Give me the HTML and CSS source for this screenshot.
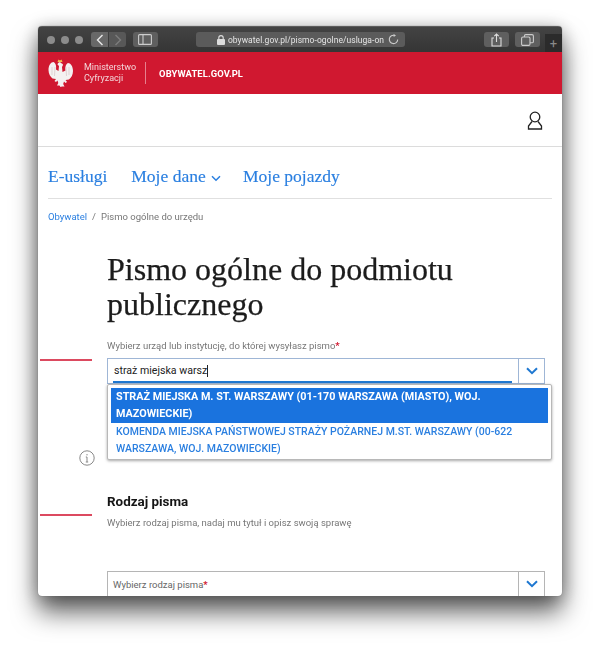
FILE: index.html
```html
<!DOCTYPE html>
<html lang="pl">
<head>
<meta charset="utf-8">
<title>Pismo ogólne</title>
<link rel="stylesheet" href="styles.css">
</head>
<body>
<div class="window">
  <div class="toolbar">
    <div class="lights"><i></i><i></i><i></i></div>
    <div class="navbtns">
      <span class="tbtn back"><svg width="8" height="12" viewBox="0 0 8 12"><path d="M6.5 1 1.5 6l5 5" fill="none" stroke="#e8e8e8" stroke-width="1.4"/></svg></span>
      <span class="tbtn fwd"><svg width="8" height="12" viewBox="0 0 8 12"><path d="M1.5 1l5 5-5 5" fill="none" stroke="#7c7c7c" stroke-width="1.4"/></svg></span>
    </div>
    <span class="tbtn sidebar"><svg width="14" height="11" viewBox="0 0 14 11"><rect x=".6" y=".6" width="12.8" height="9.8" rx="1" fill="none" stroke="#ccc" stroke-width="1.1"/><path d="M5 1v9" stroke="#ccc" stroke-width="1.1"/></svg></span>
    <div class="urlbar">
      <svg class="lock" width="8" height="10" viewBox="0 0 8 10"><rect x="0" y="4" width="8" height="6" rx="1" fill="#ddd"/><path d="M1.8 4.5V2.8a2.2 2.2 0 0 1 4.4 0v1.7" fill="none" stroke="#ddd" stroke-width="1.1"/></svg>
      <span class="url">obywatel.gov.pl/pismo-ogolne/usluga-on</span>
      <svg class="reload" width="11" height="11" viewBox="0 0 11 11"><path d="M6.8 1.4A4.2 4.2 0 1 0 9.7 5.5" fill="none" stroke="#ccc" stroke-width="1.1"/><path d="M5.6 0v3L8 1.5z" fill="#ccc"/></svg>
    </div>
    <span class="tbtn action"><svg width="11" height="14" viewBox="0 0 11 14"><path d="M3 5H1v8h9V5H8M5.5 9V1M3.3 3.2 5.5 1l2.2 2.2" fill="none" stroke="#ddd" stroke-width="1.1"/></svg></span>
    <span class="tbtn action"><svg width="13" height="12" viewBox="0 0 13 12"><rect x=".6" y="3" width="8.4" height="8.4" rx="1.4" fill="none" stroke="#ccc" stroke-width="1.1"/><path d="M3.4 3V2A1.4 1.4 0 0 1 4.8.6h6.2A1.4 1.4 0 0 1 12.4 2v5.4A1.4 1.4 0 0 1 11 8.800H9" fill="none" stroke="#ccc" stroke-width="1.1"/></svg></span>
    <span class="newtab">+</span>
  </div>

  <header class="brand">
    <svg class="eagle" width="27" height="30" viewBox="0 0 27 30">
      <path d="M11 4 12 1.500l1.500 1 1.500-1 1 2.500z" fill="#f2c14e" transform="translate(-.5 0)"/>
      <path d="M13.500 5c1.500 0 2.500 1 2.500 2l-1 2 .5 5 3-1.500c-.5-3 .2-6.500 2.500-7.500 2.500 0 5 3 5 8 0 4-2 7-4 8.500l-3.500.5 1.500 2-1.500 1-1.500-1.500-.8 2.500 1.300 2.500h-2.500L13.500 29l-1-1.500H10l1.300-2.500-.8-2.500L9 24l-1.500-1 1.500-2-3.500-.5c-2-1.500-4-4.500-4-8.500 0-5 2.500-8 5-8 2.300 1 3 4.500 2.500 7.500l2.500 1.500.5-5-1.500-1.500c.2-1.500 1.500-2.500 3-2.500z" fill="#f4f1f1"/>
      <path d="M5 9v8M8 9l-.5 9M19 9l.5 9M22 9v8" stroke="#d6c4c6" stroke-width=".7"/>
    </svg>
    <div class="ministry">Ministerstwo<br>Cyfryzacji</div>
    <div class="site">OBYWATEL.GOV.PL</div>
  </header>

  <div class="userbar">
    <svg width="16" height="19" viewBox="0 0 16 19"><circle cx="8" cy="6" r="4.800" fill="none" stroke="#222" stroke-width="1.300"/><path d="M5 10.500 1.500 15v3h13v-3L11 10.500" fill="none" stroke="#222" stroke-width="1.300"/></svg>
  </div>

  <nav class="mainnav">
    <a>E-usługi</a>
    <a>Moje dane <svg class="navchev" width="10" height="7" viewBox="0 0 10 7"><path d="M1 1.200l4 4 4-4" fill="none" stroke="#2a7fe0" stroke-width="1.500"/></svg></a>
    <a>Moje pojazdy</a>
  </nav>

  <div class="crumbs"><a>Obywatel</a><span class="sep">/</span><span>Pismo ogólne do urzędu</span></div>

  <main class="content">
    <h1>Pismo ogólne do podmiotu publicznego</h1>

    <p class="fieldlabel">Wybierz urząd lub instytucję, do której wysyłasz pismo<b>*</b></p>
    <div class="fieldrow">
      <i class="marker"></i>
      <div class="combo active">
        <div class="comboinput"><span>straż miejska warsz</span><i class="caret"></i></div>
        <div class="comboarrow"><svg width="12" height="8" viewBox="0 0 12 8"><path d="M1 1.200l5 5 5-5" fill="none" stroke="#1f78d1" stroke-width="2"/></svg></div>
        <ul class="options">
          <li class="selected">STRAŻ MIEJSKA M. ST. WARSZAWY (01-170 WARSZAWA (MIASTO), WOJ. MAZOWIECKIE)</li>
          <li>KOMENDA MIEJSKA PAŃSTWOWEJ STRAŻY POŻARNEJ M.ST. WARSZAWY (00-622 WARSZAWA, WOJ. MAZOWIECKIE)</li>
        </ul>
        <svg class="info" width="16" height="16" viewBox="0 0 16 16"><circle cx="8" cy="8" r="7.200" fill="none" stroke="#888" stroke-width="1"/><path d="M8 4v1.400M8 7v5M6.800 7H8M6.800 12h2.400" stroke="#888" stroke-width="1"/></svg>
      </div>
    </div>

    <section class="section2">
      <h2>Rodzaj pisma</h2>
      <div class="fieldrow subrow"><i class="marker"></i><p class="sub">Wybierz rodzaj pisma, nadaj mu tytuł i opisz swoją sprawę</p></div>
      <div class="combo plain">
        <div class="comboinput"><span>Wybierz rodzaj pisma<b>*</b></span></div>
        <div class="comboarrow"><svg width="12" height="8" viewBox="0 0 12 8"><path d="M1 1.200l5 5 5-5" fill="none" stroke="#1f78d1" stroke-width="2"/></svg></div>
      </div>
    </section>
  </main>
</div>
</body>
</html>
```

FILE: styles.css
```css
* { box-sizing: border-box; }
html, body { margin: 0; height: 100%; background: #fff; overflow: hidden; }
body { padding: 26px 38px 0; font-family: Roboto, "Liberation Sans", sans-serif; }

.window {
  width: 524px;
  height: 570px;
  border-radius: 4px;
  overflow: hidden;
  background: #fff;
  box-shadow: 0 0 1px #555, 0 16px 26px rgba(0,0,0,.62), 0 2px 18px rgba(0,0,0,.28);
  filter: blur(.35px);
}

.toolbar {
  height: 26px;
  display: flex;
  align-items: center;
  padding: 0 0 0 9px;
  background: linear-gradient(#434343, #353535);
  border-top: 1px solid #5c5c5c;
}
.lights { display: flex; gap: 6px; margin-right: 8px; }
.lights i { width: 8px; height: 8px; border-radius: 50%; background: #8c8c8c; }
.tbtn {
  height: 15px;
  display: flex;
  align-items: center;
  justify-content: center;
  background: #5f5f5f;
  border-radius: 3px;
}
.navbtns { display: flex; gap: 1px; margin-right: 7px; }
.back { width: 17px; border-radius: 3px 0 0 3px; background: #686868; }
.fwd { width: 17px; border-radius: 0 3px 3px 0; background: #585858; }
.sidebar { width: 25px; margin-right: 38px; }
.urlbar {
  width: 210px;
  height: 15px;
  display: flex;
  align-items: center;
  margin-right: 79px;
  padding-left: 21px;
  background: #5b5b5b;
  border-radius: 3px;
  position: relative;
}
.lock { margin-right: 3px; flex: none; }
.url { font-size: 8.500px; color: #e4e4e4; white-space: nowrap; overflow: hidden; width: 160px; letter-spacing: .05px; }
.reload { margin-left: 0; flex: none; }
.action { width: 25px; margin-right: 6px; }
.newtab {
  width: 17px;
  height: 18px;
  margin: 6px 0 0 -1px;
  background: #2b2b2b;
  color: #8a8a8a;
  font-size: 13px;
  line-height: 19px;
  text-align: center;
}

.brand {
  height: 42px;
  display: flex;
  align-items: center;
  padding-left: 9px;
  background: #d01830;
}
.eagle { flex: none; margin-right: 10px; }
.ministry {
  font-size: 9px;
  line-height: 10.500px;
  color: #f3d5d9;
  padding-right: 9px;
  margin-right: 13px;
  border-right: 1px solid #e6808e;
  height: 22px;
}
.site { font-size: 9.400px; font-weight: 700; color: #fff; letter-spacing: .1px; }

.userbar {
  height: 53px;
  display: flex;
  align-items: center;
  justify-content: flex-end;
  padding-right: 19px;
  border-bottom: 1px solid #dcdcdc;
}

.mainnav {
  height: 52px;
  margin: 0 10px;
  padding-top: 8px;
  display: flex;
  align-items: center;
  gap: 24px;
  border-bottom: 1px solid #e0e0e0;
  font-family: "Liberation Serif", serif;
  font-size: 17.500px;
  color: #2a7fe0;
  -webkit-text-stroke: .15px #2a7fe0;
}
.navchev { margin: 0 -2px 0 1px; }

.crumbs {
  margin: 11px 0 0 10px;
  font-size: 9.500px;
  line-height: 14px;
  color: #777;
}
.crumbs a { color: #2a7fe0; }
.sep { margin: 0 5px; }

.content { padding-left: 69px; }
h1 {
  margin: 28px 0 0;
  width: 380px;
  font-family: "Liberation Serif", serif;
  font-weight: 400;
  font-size: 32px;
  line-height: 35px;
  color: #1c1c1c;
  -webkit-text-stroke: .25px #1c1c1c;
}
.fieldlabel {
  margin: 17px 0 0;
  font-size: 9.500px;
  line-height: 14px;
  color: #777;
}
.fieldlabel b, .combo b { color: #d01830; }
.fieldrow { position: relative; margin-top: 5px; }
.marker {
  position: absolute;
  left: -67px;
  top: 1px;
  width: 52px;
  height: 1.500px;
  background: #dc4a60;
}
.combo {
  position: relative;
  width: 438px;
  height: 26px;
  display: flex;
  border: 1px solid #b5b5b5;
  background: #fff;
}
.combo.active { border-color: #9fb6d6; }
.comboinput {
  flex: 1;
  display: flex;
  align-items: center;
  padding-left: 5px;
  font-size: 9.500px;
  color: #666;
}
.active .comboinput { font-size: 10.600px; color: #222; position: relative; padding-left: 6px; padding-bottom: 1px; }
.active .comboinput::after {
  content: "";
  position: absolute;
  left: 5px;
  right: 6px;
  bottom: 0;
  height: 2px;
  background: #1f78d1;
}
.caret { width: 1px; height: 12px; background: #222; }
.comboarrow {
  width: 26px;
  flex: none;
  display: flex;
  align-items: center;
  justify-content: center;
  border-left: 1px solid #b5b5b5;
}
.active .comboarrow { border-left-color: #9fb6d6; }

.options {
  position: absolute;
  left: -1px;
  top: 25px;
  z-index: 2;
  width: 445px;
  height: 76px;
  margin: 0;
  padding: 3px;
  list-style: none;
  background: #fff;
  border: 1px solid #b8b8b8;
  border-radius: 2px;
  box-shadow: 0 1px 3px rgba(0,0,0,.35);
  font-size: 10.500px;
  font-weight: 500;
  line-height: 17.300px;
  color: #2a7fe0;
}
.options li { padding: 0 6px 0 5px; }
.options .selected { background: #1a73de; color: #fff; font-weight: 700; font-size: 10.800px; }
.info { position: absolute; left: -29px; top: 91px; }

.section2 { margin-top: 109px; }
h2 { margin: 0; font-size: 13.400px; line-height: 18px; font-weight: 700; color: #151515; }
.subrow { margin-top: 0; }
.subrow .marker { top: -2px; }
.sub { margin: 5px 0 0; font-size: 9.500px; line-height: 14px; color: #777; }
.plain { margin-top: 41px; }
```
